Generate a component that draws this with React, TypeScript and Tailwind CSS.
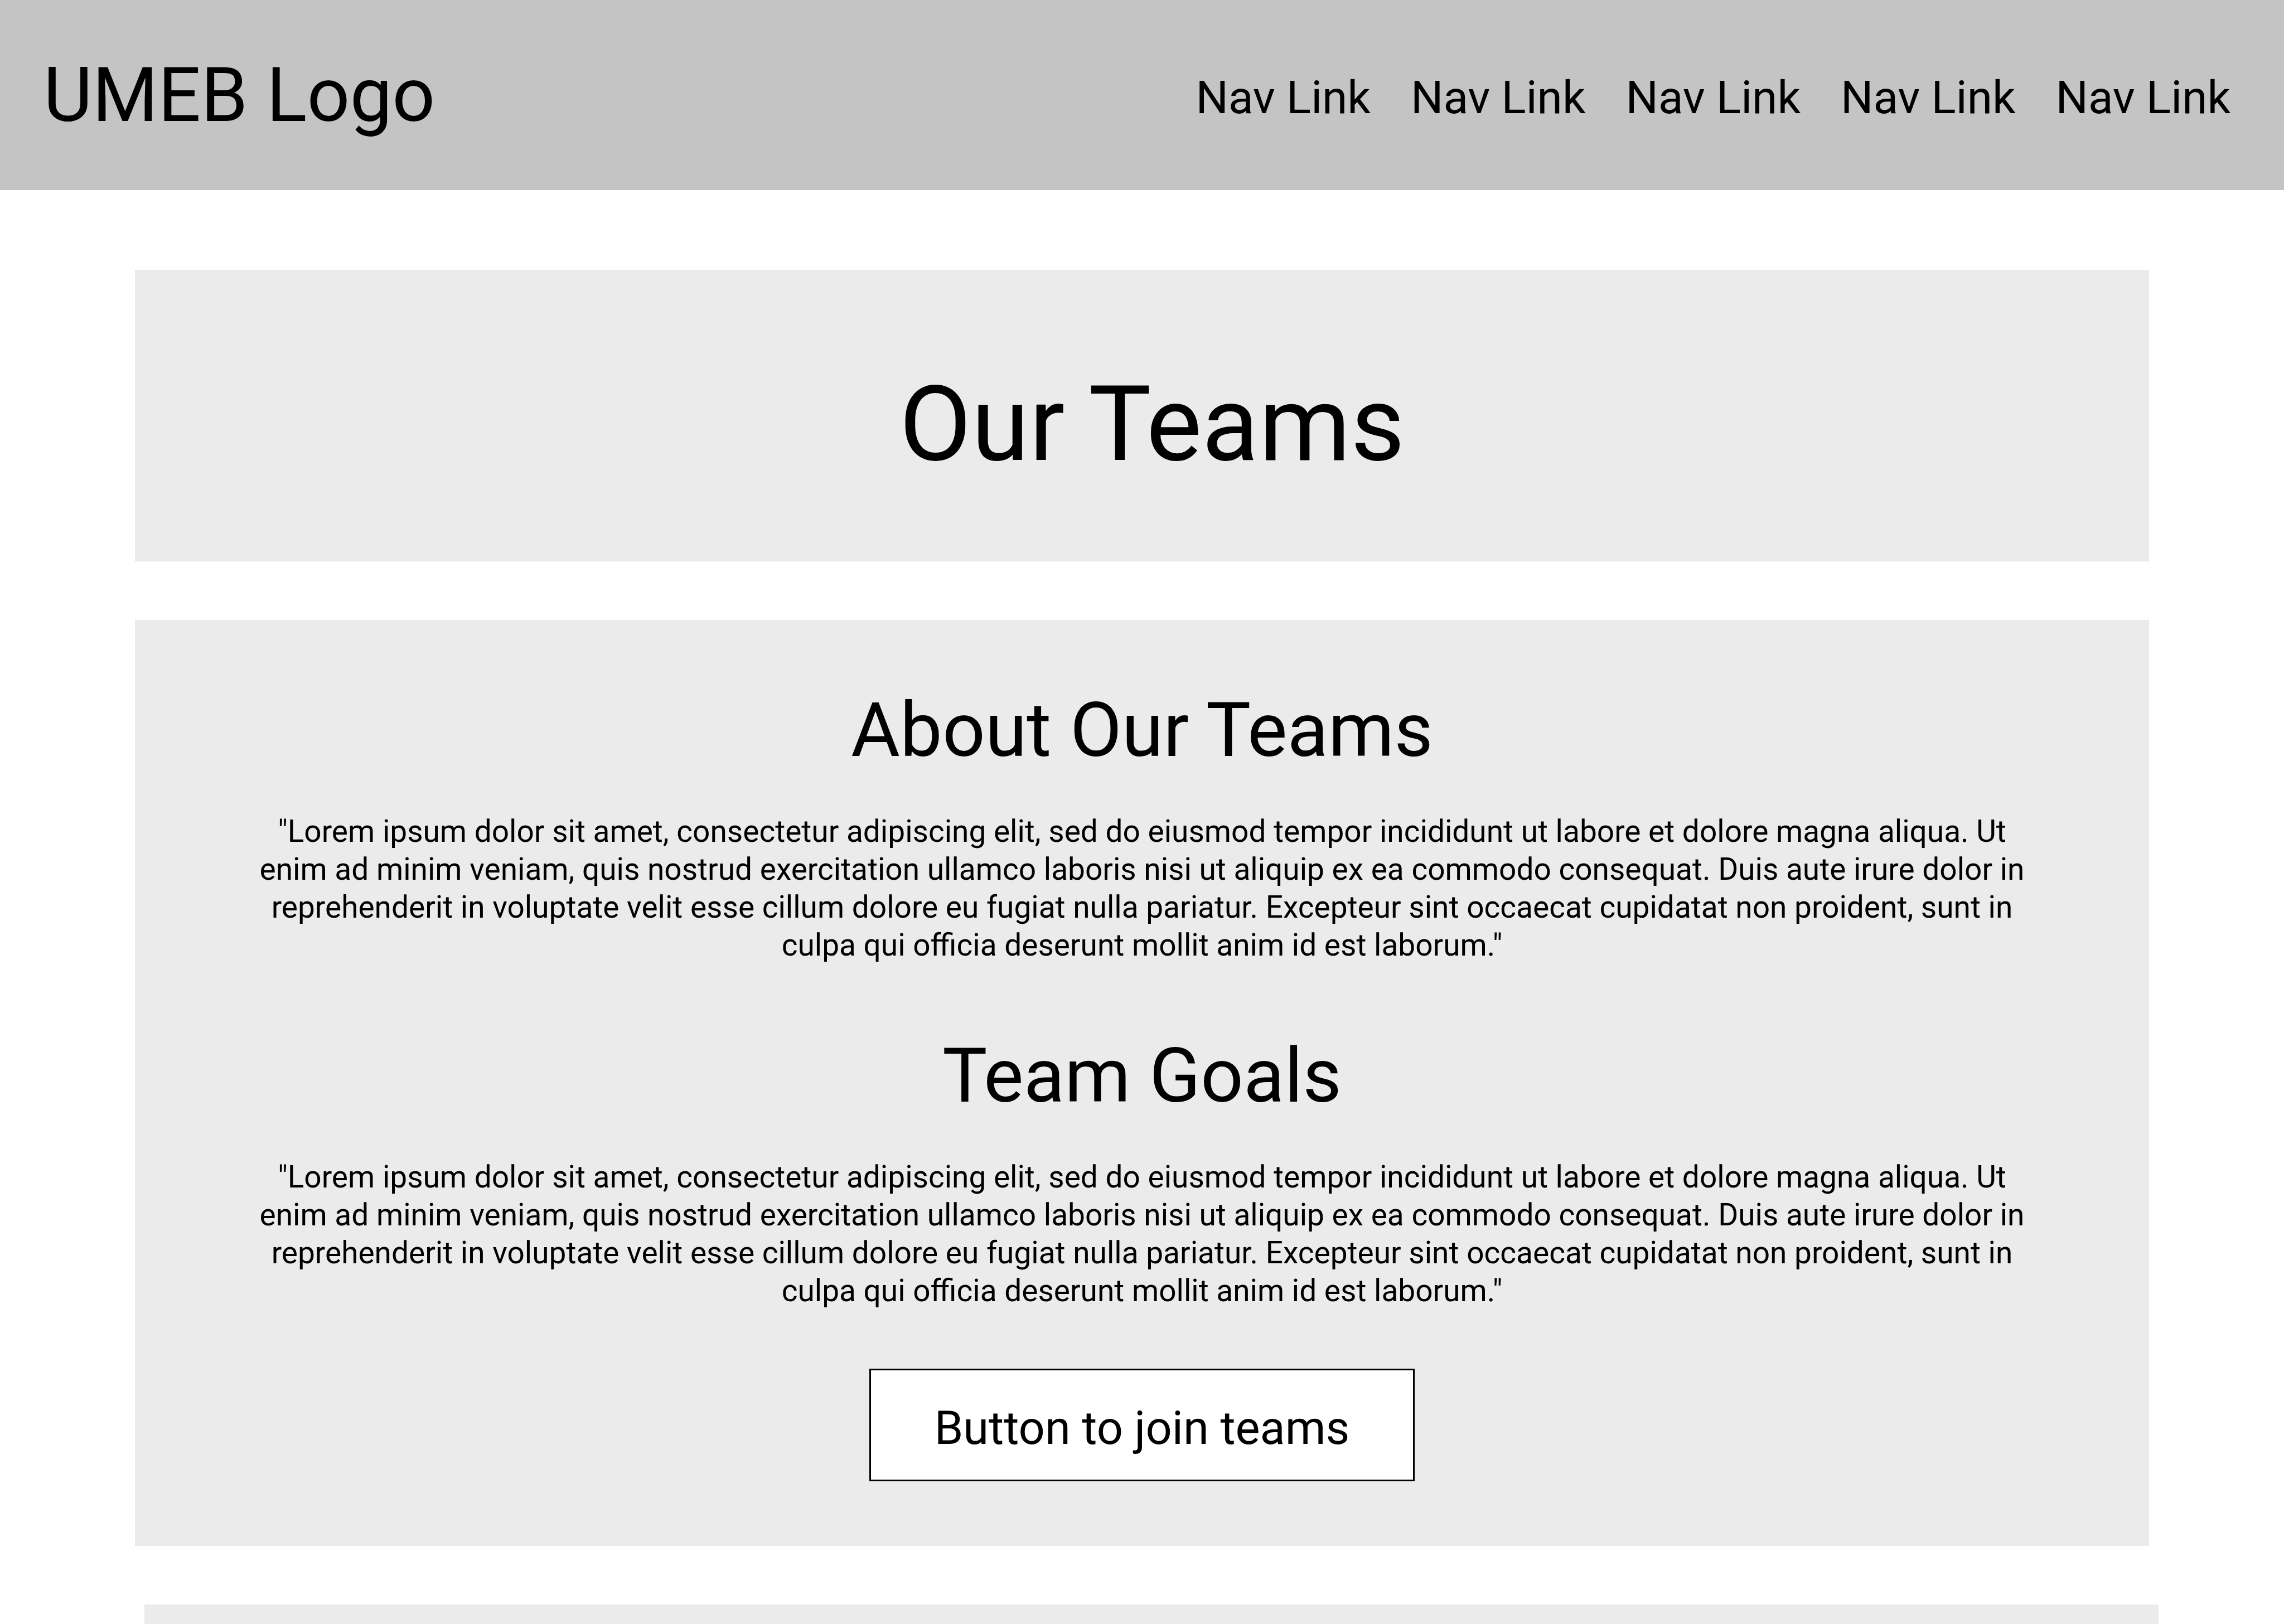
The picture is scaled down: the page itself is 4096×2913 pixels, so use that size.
const navLinks = ["Nav Link", "Nav Link", "Nav Link", "Nav Link", "Nav Link"];

const loremIpsum =
  '"Lorem ipsum dolor sit amet, consectetur adipiscing elit, sed do eiusmod tempor incididunt ut labore et dolore magna aliqua. Ut enim ad minim veniam, quis nostrud exercitation ullamco laboris nisi ut aliquip ex ea commodo consequat. Duis aute irure dolor in reprehenderit in voluptate velit esse cillum dolore eu fugiat nulla pariatur. Excepteur sint occaecat cupidatat non proident, sunt in culpa qui officia deserunt mollit anim id est laborum."';

function Header() {
  return (
    <header className="flex min-h-[341px] items-center justify-between bg-[#c4c4c4] pr-24 pl-[78px]">
      <a href="#home" className="text-[135px] leading-[160px]">
        UMEB Logo
      </a>
      <nav className="flex gap-[72px] pt-2 text-[82px] leading-[96px]">
        {navLinks.map((label, i) => (
          <a key={i} href="#nav">
            {label}
          </a>
        ))}
      </nav>
    </header>
  );
}

function TextBlock({ title, body }: { title: string; body: string }) {
  return (
    <div className="flex flex-col gap-[67px] text-center">
      <h2 className="text-[135px] leading-[160px]">{title}</h2>
      <p className="text-[55px] leading-[68px]">{body}</p>
    </div>
  );
}

export default function App() {
  return (
    <div className="flex min-h-screen flex-col bg-white font-[Roboto,sans-serif] font-normal text-black">
      <Header />
      <main className="flex grow flex-col gap-[105px] px-[242px] pt-[143px]">
        <section className="bg-[#ebebeb] pt-[177px] pb-[146px] pl-9 text-center">
          <h1 className="text-[188px] leading-[200px]">Our Teams</h1>
        </section>

        <section className="flex flex-col items-center bg-[#ebebeb] px-[200px] pt-[118px] pb-[116px]">
          <div className="flex flex-col gap-[121px]">
            <TextBlock title="About Our Teams" body={loremIpsum} />
            <TextBlock title="Team Goals" body={loremIpsum} />
          </div>
          <button
            type="button"
            className="mt-[106px] border-3 border-black bg-white px-[114px] pt-[56px] pb-11 text-[83px] leading-[96px]"
          >
            Button to join teams
          </button>
        </section>

        <section className="-mr-[17px] ml-[17px] grow bg-[#ebebeb]" />
      </main>
    </div>
  );
}
